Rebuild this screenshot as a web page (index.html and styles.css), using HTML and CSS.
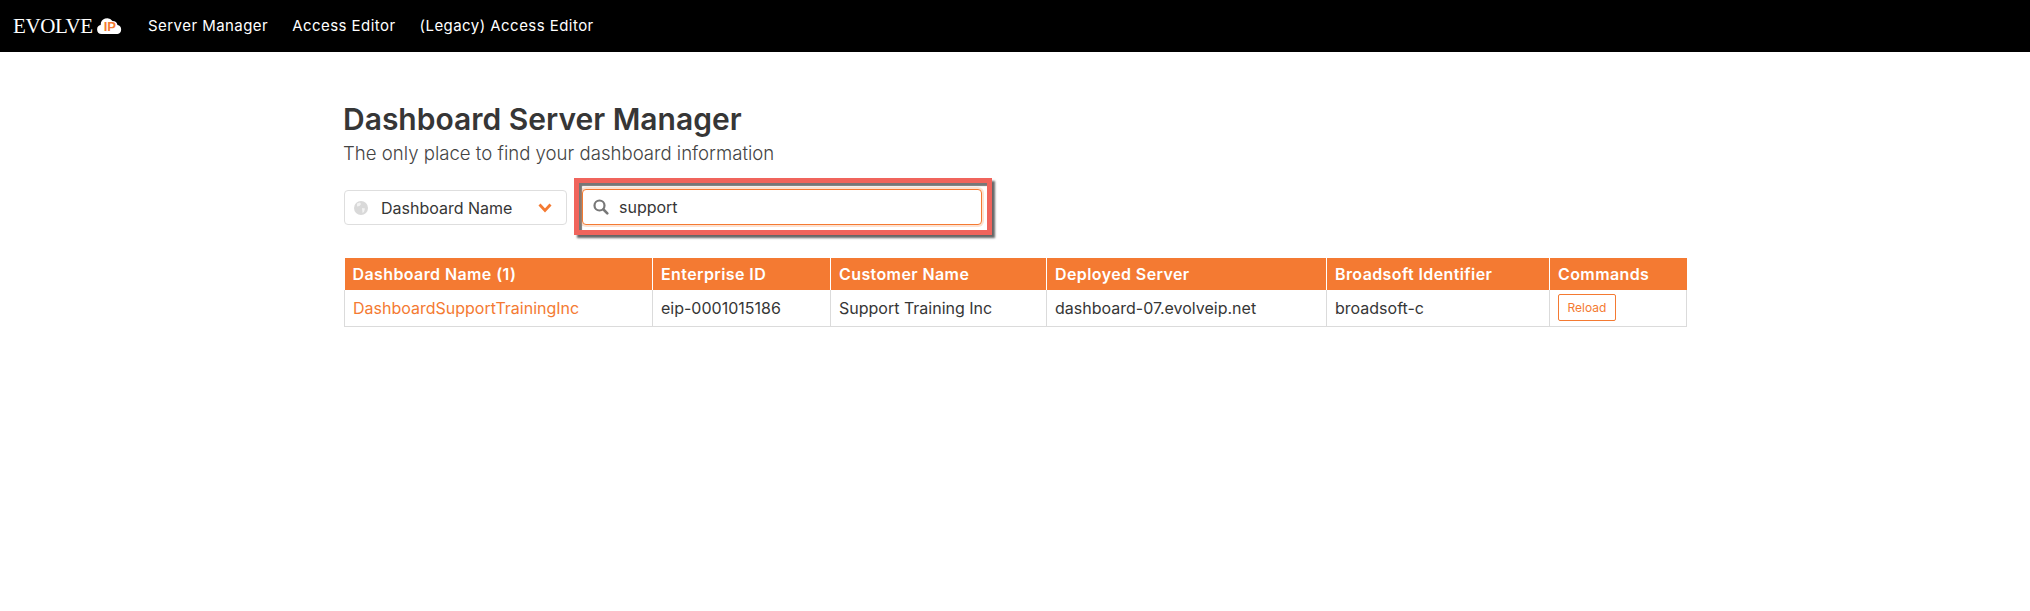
FILE: index.html
```html
<!DOCTYPE html>
<html lang="en">
<head>
<meta charset="utf-8">
<title>Dashboard Server Manager</title>
<link rel="stylesheet" href="styles.css">
</head>
<body>
<header class="topbar">
  <a class="logo" href="#">
    <span class="logo-word">EVOLVE</span>
    <span class="logo-cloud">
      <svg width="25" height="16" viewBox="0 0 25 16"><path fill="#fff" d="M4.500 16a4.500 4.500 0 0 1-.8-8.900A6.500 6.500 0 0 1 15.500 3 5 5 0 0 1 20.500 7a4.600 4.600 0 0 1 0 9z"/></svg>
      <span class="logo-ip">IP</span>
    </span>
  </a>
  <nav class="nav">
    <a href="#">Server Manager</a>
    <a href="#">Access Editor</a>
    <a href="#">(Legacy) Access Editor</a>
  </nav>
</header>
<main class="page">
  <h1 class="title">Dashboard Server Manager</h1>
  <p class="subtitle">The only place to find your dashboard information</p>
  <div class="filters">
    <div class="select">
      <svg class="globe" width="14" height="14" viewBox="0 0 14 14"><circle cx="7" cy="7" r="7" fill="#d9d9d9"/><path fill="#f2f2f2" d="M3 2.500l3-1 1 1.500-1.500 2L3 5.500zM8 7l3 .5-1 3.500-1.500 1z"/></svg>
      <span class="select-label">Dashboard Name</span>
      <svg class="chevron" width="14" height="10" viewBox="0 0 14 10"><path fill="none" stroke="#f47a32" stroke-width="2.800" d="M1.500 1.500 7 7.500l5.500-6"/></svg>
    </div>
    <div class="callout">
      <div class="search">
        <svg width="16" height="16" viewBox="0 0 16 16"><circle cx="6.500" cy="6.500" r="5" fill="none" stroke="#777" stroke-width="2.200"/><path stroke="#777" stroke-width="2.600" stroke-linecap="round" d="M10.500 10.500 14.300 14.300"/></svg>
        <span class="search-text">support</span>
      </div>
    </div>
  </div>
  <table class="grid">
    <thead>
      <tr>
        <th class="c1">Dashboard Name (1)</th>
        <th class="c2">Enterprise ID</th>
        <th class="c3">Customer Name</th>
        <th class="c4">Deployed Server</th>
        <th class="c5">Broadsoft Identifier</th>
        <th class="c6">Commands</th>
      </tr>
    </thead>
    <tbody>
      <tr>
        <td><a class="link" href="#">DashboardSupportTrainingInc</a></td>
        <td>eip-0001015186</td>
        <td>Support Training Inc</td>
        <td>dashboard-07.evolveip.net</td>
        <td>broadsoft-c</td>
        <td><button class="reload">Reload</button></td>
      </tr>
    </tbody>
  </table>
</main>
</body>
</html>
```

FILE: styles.css
```css
* { box-sizing: border-box; }
html, body { margin: 0; padding: 0; background: #fff; }
body { font-family: Inter, "Liberation Sans", sans-serif; color: #363636; font-size: 16px; }
a { text-decoration: none; color: inherit; }

.topbar { height: 52px; background: #000; display: flex; align-items: center; padding-left: 13px; }
.logo { display: flex; align-items: center; color: #fff; width: 135px; }
.logo-word { font-family: "Liberation Serif", serif; font-size: 21px; letter-spacing: -0.4px; line-height: 1; }
.logo-cloud { position: relative; display: flex; margin-left: 4px; margin-top: -1px; }
.logo-ip { position: absolute; left: 7px; top: 1px; font: 700 13px/15px "Liberation Sans", sans-serif; color: #f47a32; }
.nav { display: flex; gap: 24px; color: #fff; font-size: 15px; line-height: 20px; letter-spacing: 0.45px; }

.page { width: 1346px; margin: 0 auto; padding-top: 48px; }
.title { margin: 0 0 0 1px; font-size: 30px; line-height: 38px; font-weight: 600; color: #363636; }
.subtitle { margin: 2px 0 0 1px; font-size: 18.6px; line-height: 26px; font-weight: 300; color: #444; }
.filters { display: flex; align-items: flex-start; margin-top: 12px; margin-left: 2px; }
.select { width: 223px; height: 35px; margin-top: 12px; border: 1px solid #dedede; border-radius: 4px; display: flex; align-items: center; padding: 0 14px 0 9px; }
.select-label { margin-left: 13px; flex: 1; }
.callout { margin-left: 7px; padding: 6px 5px 5px 3px; background: #fff; border: 5px solid #f0645c; box-shadow: 3px 3px 2px #666, inset 3px 3px 1px #777; }
.search { width: 400px; height: 36px; border: 1px solid #f47a32; border-radius: 4px; display: flex; align-items: center; padding-left: 10px; background: #fff; box-shadow: 0 0 0 2px rgba(244, 122, 50, 0.22); }
.search-text { margin-left: 10px; }

.grid { width: 1343px; margin: 23px 0 0 2px; table-layout: fixed; border-collapse: collapse; font-size: 16px; }
.grid th { height: 32px; padding: 0 8px; background: #f47a32; color: #fff; font-weight: 600; letter-spacing: 0.4px; text-align: left; border-left: 1px solid #fff; }
.grid th:first-child { border-left: 0; }
.grid td { height: 36px; padding: 0 8px; border: 1px solid #dbdbdb; border-top: 0; }
.c1 { width: 308px; }
.c2 { width: 178px; }
.c3 { width: 216px; }
.c4 { width: 280px; }
.c5 { width: 223px; }
.link { color: #f47a32; }
.reload { display: block; width: 58px; height: 27px; padding: 0; background: #fff; border: 1px solid #f47a32; border-radius: 2px; color: #f47a32; font: 12px Inter, sans-serif; }
```
